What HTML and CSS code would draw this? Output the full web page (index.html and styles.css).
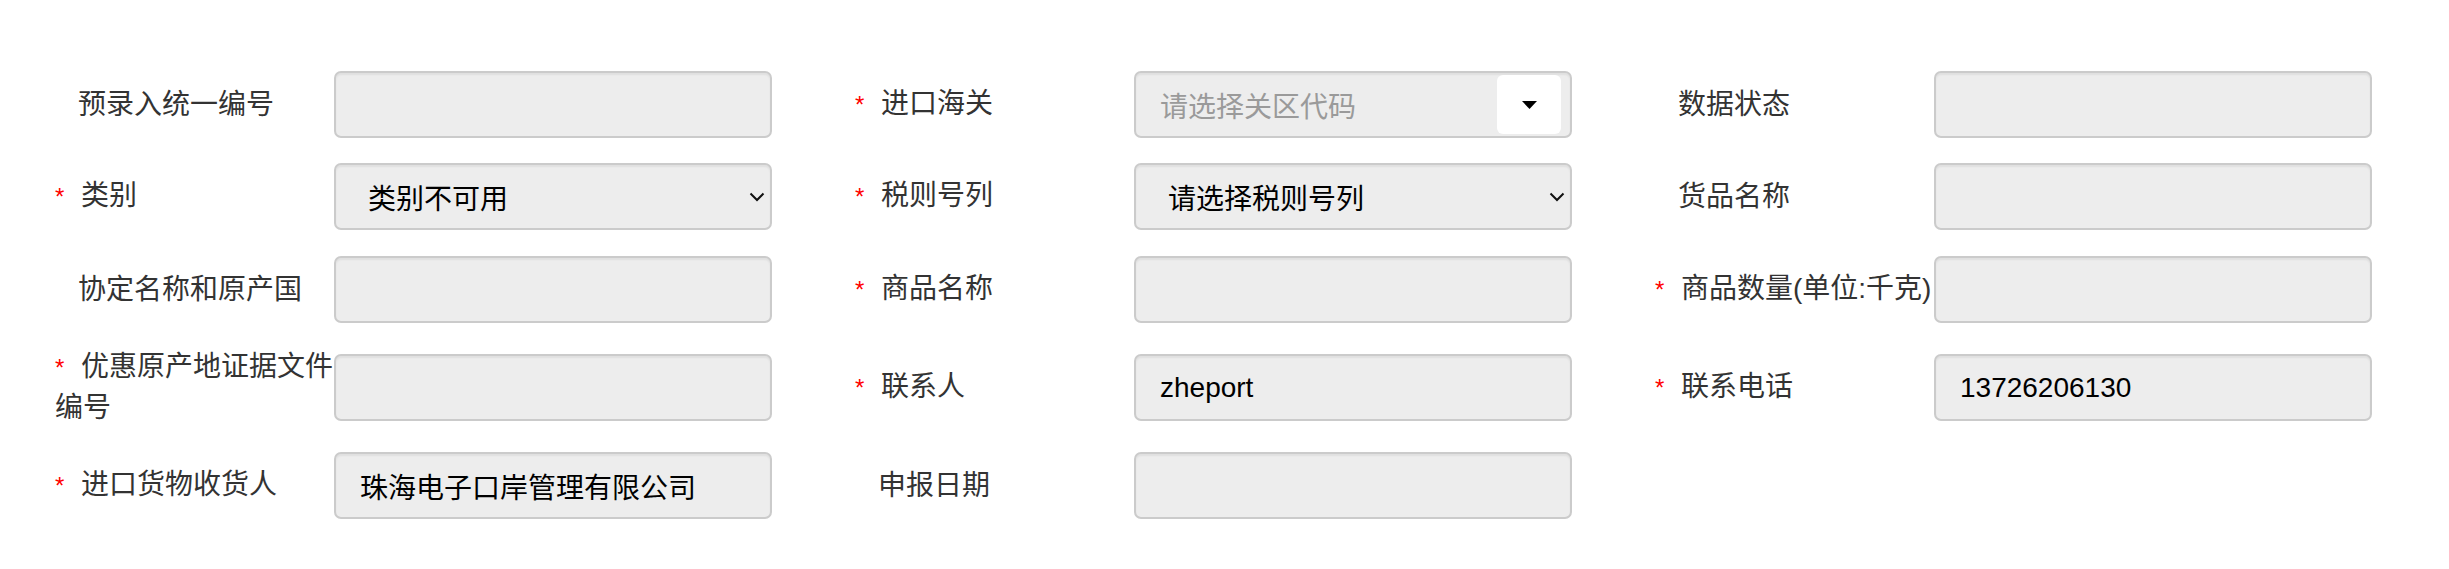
FILE: index.html
```html
<!DOCTYPE html>
<html lang="zh-CN">
<head>
<meta charset="utf-8">
<title>进口申报表单</title>
<link rel="stylesheet" href="styles.css">
</head>
<body>
<form class="form">
  <div class="field">
    <label class="label plain">预录入统一编号</label>
    <input class="box" type="text" readonly>
  </div>
  <div class="field">
    <label class="label"><span class="star">*</span>进口海关</label>
    <div class="box combo">
      <span class="placeholder">请选择关区代码</span>
      <span class="combo-btn">
        <svg width="15" height="8" viewBox="0 0 15 8"><polygon points="0,0 15,0 7.5,8" fill="#000"/></svg>
      </span>
    </div>
  </div>
  <div class="field">
    <label class="label plain">数据状态</label>
    <input class="box" type="text" readonly>
  </div>

  <div class="field">
    <label class="label"><span class="star">*</span>类别</label>
    <div class="box select">
      <span class="select-text">类别不可用</span>
      <svg class="chevron" width="16" height="10" viewBox="0 0 16 10"><polyline points="1.5,1.5 8,8 14.5,1.5" fill="none" stroke="#111" stroke-width="2"/></svg>
    </div>
  </div>
  <div class="field">
    <label class="label"><span class="star">*</span>税则号列</label>
    <div class="box select">
      <span class="select-text">请选择税则号列</span>
      <svg class="chevron" width="16" height="10" viewBox="0 0 16 10"><polyline points="1.5,1.5 8,8 14.5,1.5" fill="none" stroke="#111" stroke-width="2"/></svg>
    </div>
  </div>
  <div class="field">
    <label class="label plain">货品名称</label>
    <input class="box" type="text" readonly>
  </div>

  <div class="field">
    <label class="label plain">协定名称和原产国</label>
    <input class="box" type="text" readonly>
  </div>
  <div class="field">
    <label class="label"><span class="star">*</span>商品名称</label>
    <input class="box" type="text" readonly>
  </div>
  <div class="field">
    <label class="label"><span class="star">*</span>商品数量(单位:千克)</label>
    <input class="box" type="text" readonly>
  </div>

  <div class="field">
    <label class="label"><span class="star">*</span>优惠原产地证据文件编号</label>
    <input class="box" type="text" readonly>
  </div>
  <div class="field">
    <label class="label"><span class="star">*</span>联系人</label>
    <input class="box" type="text" value="zheport" readonly>
  </div>
  <div class="field">
    <label class="label"><span class="star">*</span>联系电话</label>
    <input class="box" type="text" value="13726206130" readonly>
  </div>

  <div class="field">
    <label class="label"><span class="star">*</span>进口货物收货人</label>
    <input class="box" type="text" value="珠海电子口岸管理有限公司" readonly>
  </div>
  <div class="field">
    <label class="label plain">申报日期</label>
    <input class="box" type="text" readonly>
  </div>
</form>
</body>
</html>
```
FILE: styles.css
```css
html, body {
  margin: 0;
  padding: 0;
  background: #ffffff;
}

body {
  font-family: "Liberation Sans", "Noto Sans CJK SC", sans-serif;
  font-size: 28px;
  color: #333333;
}

.form {
  display: grid;
  grid-template-columns: repeat(3, 800px);
  grid-template-rows: 92px 93px 98px 98px 67px;
  padding-top: 71px;
  margin: 0;
}

.field {
  display: flex;
  align-items: center;
  height: 67px;
}

.label {
  flex: none;
  width: 279px;
  margin-left: 55px;
  line-height: 40px;
  color: #333333;
}

.label.plain {
  padding-left: 23px;
  box-sizing: border-box;
}

.star {
  display: inline-block;
  width: 26px;
  font-size: 24px;
  color: #ff0000;
}

.box {
  flex: none;
  box-sizing: border-box;
  width: 438px;
  height: 67px;
  margin: 0;
  padding: 0 24px;
  border: 2px solid #cbcbcb;
  border-radius: 7px;
  background: #ededed;
  box-shadow: inset 0 2px 2px rgba(0, 0, 0, 0.06);
  font-family: "Liberation Sans", "Noto Sans CJK SC", sans-serif;
  font-size: 28px;
  color: #000000;
  outline: none;
}

.combo {
  display: flex;
  align-items: center;
  padding-right: 9px;
}

.placeholder {
  flex: 1;
  color: #9a9a9a;
}

.combo-btn {
  flex: none;
  display: flex;
  align-items: center;
  justify-content: center;
  width: 64px;
  height: 59px;
  border-radius: 6px;
  background: #ffffff;
}

.select {
  display: flex;
  align-items: center;
  justify-content: space-between;
  padding: 0 5px 0 32px;
}

.select-text {
  color: #000000;
}

.chevron {
  flex: none;
}
```
